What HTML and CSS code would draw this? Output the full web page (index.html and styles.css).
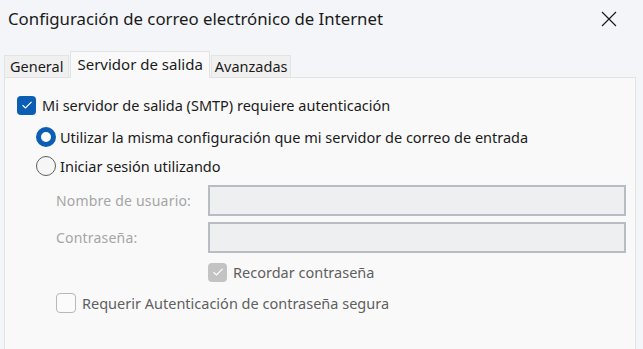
FILE: index.html
```html
<!DOCTYPE html>
<html lang="es">
<head>
<meta charset="utf-8">
<link rel="stylesheet" href="styles.css">
</head>
<body>
<div class="window">
  <div class="titlebar">
    <span class="title">Configuración de correo electrónico de Internet</span>
    <svg class="close" width="16" height="16" viewBox="0 0 16 16"><path d="M1 1L15 15M15 1L1 15" stroke="#1a1a1a" stroke-width="1.2" fill="none"/></svg>
  </div>
  <div class="tabs">
    <div class="tab t1">General</div>
    <div class="tab active">Servidor de salida</div>
    <div class="tab t3">Avanzadas</div>
  </div>
  <div class="panel">
    <div class="row r1">
      <span class="check on"><svg width="12" height="10" viewBox="0 0 12 10"><path d="M1.5 5.2L4.5 8L10.5 1.8" stroke="#fff" stroke-width="1.2" fill="none"/></svg></span>
      <span class="lbl">Mi servidor de salida (SMTP) requiere autenticación</span>
    </div>
    <div class="row r2 indent">
      <span class="radio on"></span>
      <span class="lbl">Utilizar la misma configuración que mi servidor de correo de entrada</span>
    </div>
    <div class="row r3 indent">
      <span class="radio"></span>
      <span class="lbl">Iniciar sesión utilizando</span>
    </div>
    <div class="field f1">
      <span class="flabel">Nombre de usuario:</span>
      <span class="input"></span>
    </div>
    <div class="field f2">
      <span class="flabel">Contraseña:</span>
      <span class="input"></span>
    </div>
    <div class="row r4">
      <span class="check dis"><svg width="12" height="10" viewBox="0 0 12 10"><path d="M1.5 5.2L4.5 8L10.5 1.8" stroke="#fff" stroke-width="1.2" fill="none"/></svg></span>
      <span class="lbl">Recordar contraseña</span>
    </div>
    <div class="row r5">
      <span class="check off"></span>
      <span class="lbl">Requerir Autenticación de contraseña segura</span>
    </div>
  </div>
</div>
</body>
</html>
```
FILE: styles.css
```css
* { box-sizing: border-box; }
html, body { margin: 0; padding: 0; }
body {
  width: 643px;
  height: 349px;
  overflow: hidden;
  background: #f3f5f8;
  font-family: "Noto Sans", "Open Sans", sans-serif;
  color: #1b1b1b;
}
.window { width: 643px; height: 349px; display: flex; flex-direction: column; }
.titlebar {
  height: 50px;
  display: flex;
  align-items: flex-start;
  justify-content: space-between;
  padding: 8px 26px 0 8px;
}
.title { font-size: 16.8px; line-height: 22px; color: #1a1a1a; }
.close { margin-top: 3px; }
.tabs {
  display: flex;
  align-items: flex-end;
  padding-left: 4px;
  height: 27px;
}
.tab {
  font-size: 14.5px;
  line-height: 20px;
  height: 22px;
  background: #f0f0f0;
  border: 1px solid #e3e3e3;
  border-bottom: none;
  color: #1b1b1b;
}
.t1 { padding: 0 5px; }
.t3 { padding: 0 3px; }
.tab.active {
  font-size: 15px;
  height: 27px;
  background: #f9f9f9;
  padding: 2px 6px 0;
  margin: 0 1px -1px;
  position: relative;
  z-index: 1;
}
.panel {
  flex: 1;
  margin: 0 7px 0 4px;
  background: #f9f9f9;
  border: 1px solid #e3e3e3;
  border-bottom: none;
  padding-left: 12px;
  display: flex;
  flex-direction: column;
}
.row { display: flex; align-items: center; font-size: 14.5px; height: 20px; }
.lbl { white-space: nowrap; }
.r1 { margin-top: 17px; }
.r2 { margin-top: 12px; }
.r3 { margin-top: 9px; }
.indent { padding-left: 19px; }
.check {
  width: 19px; height: 19px;
  border-radius: 4px;
  display: flex; align-items: center; justify-content: center;
  margin-right: 6px;
  flex: none;
}
.check.on { background: #0b5eb4; }
.check.dis { background: #c3c3c3; }
.check.off { width: 20px; height: 20px; border: 1px solid #b8b8b8; background: #fbfbfb; }
.radio {
  width: 20px; height: 20px;
  border-radius: 50%;
  border: 1px solid #5e5e5e;
  background: #f6f6f6;
  margin-right: 4px;
  flex: none;
}
.radio.on { border: 5.5px solid #0b5eb4; background: #fff; }
.field { display: flex; align-items: center; padding-left: 39px; height: 31px; }
.f1 { margin-top: 9px; }
.f2 { margin-top: 6px; }
.flabel { width: 152px; font-size: 14px; color: #a5a5a5; letter-spacing: 0.2px; }
.input {
  width: 418px; height: 31px;
  background: #eeeff1;
  border: 2px solid #b7bcc5;
}
.r4 { margin-top: 9px; padding-left: 191px; color: #5f5f5f; }
.r5 { margin-top: 11px; padding-left: 39px; color: #5f5f5f; }
```
